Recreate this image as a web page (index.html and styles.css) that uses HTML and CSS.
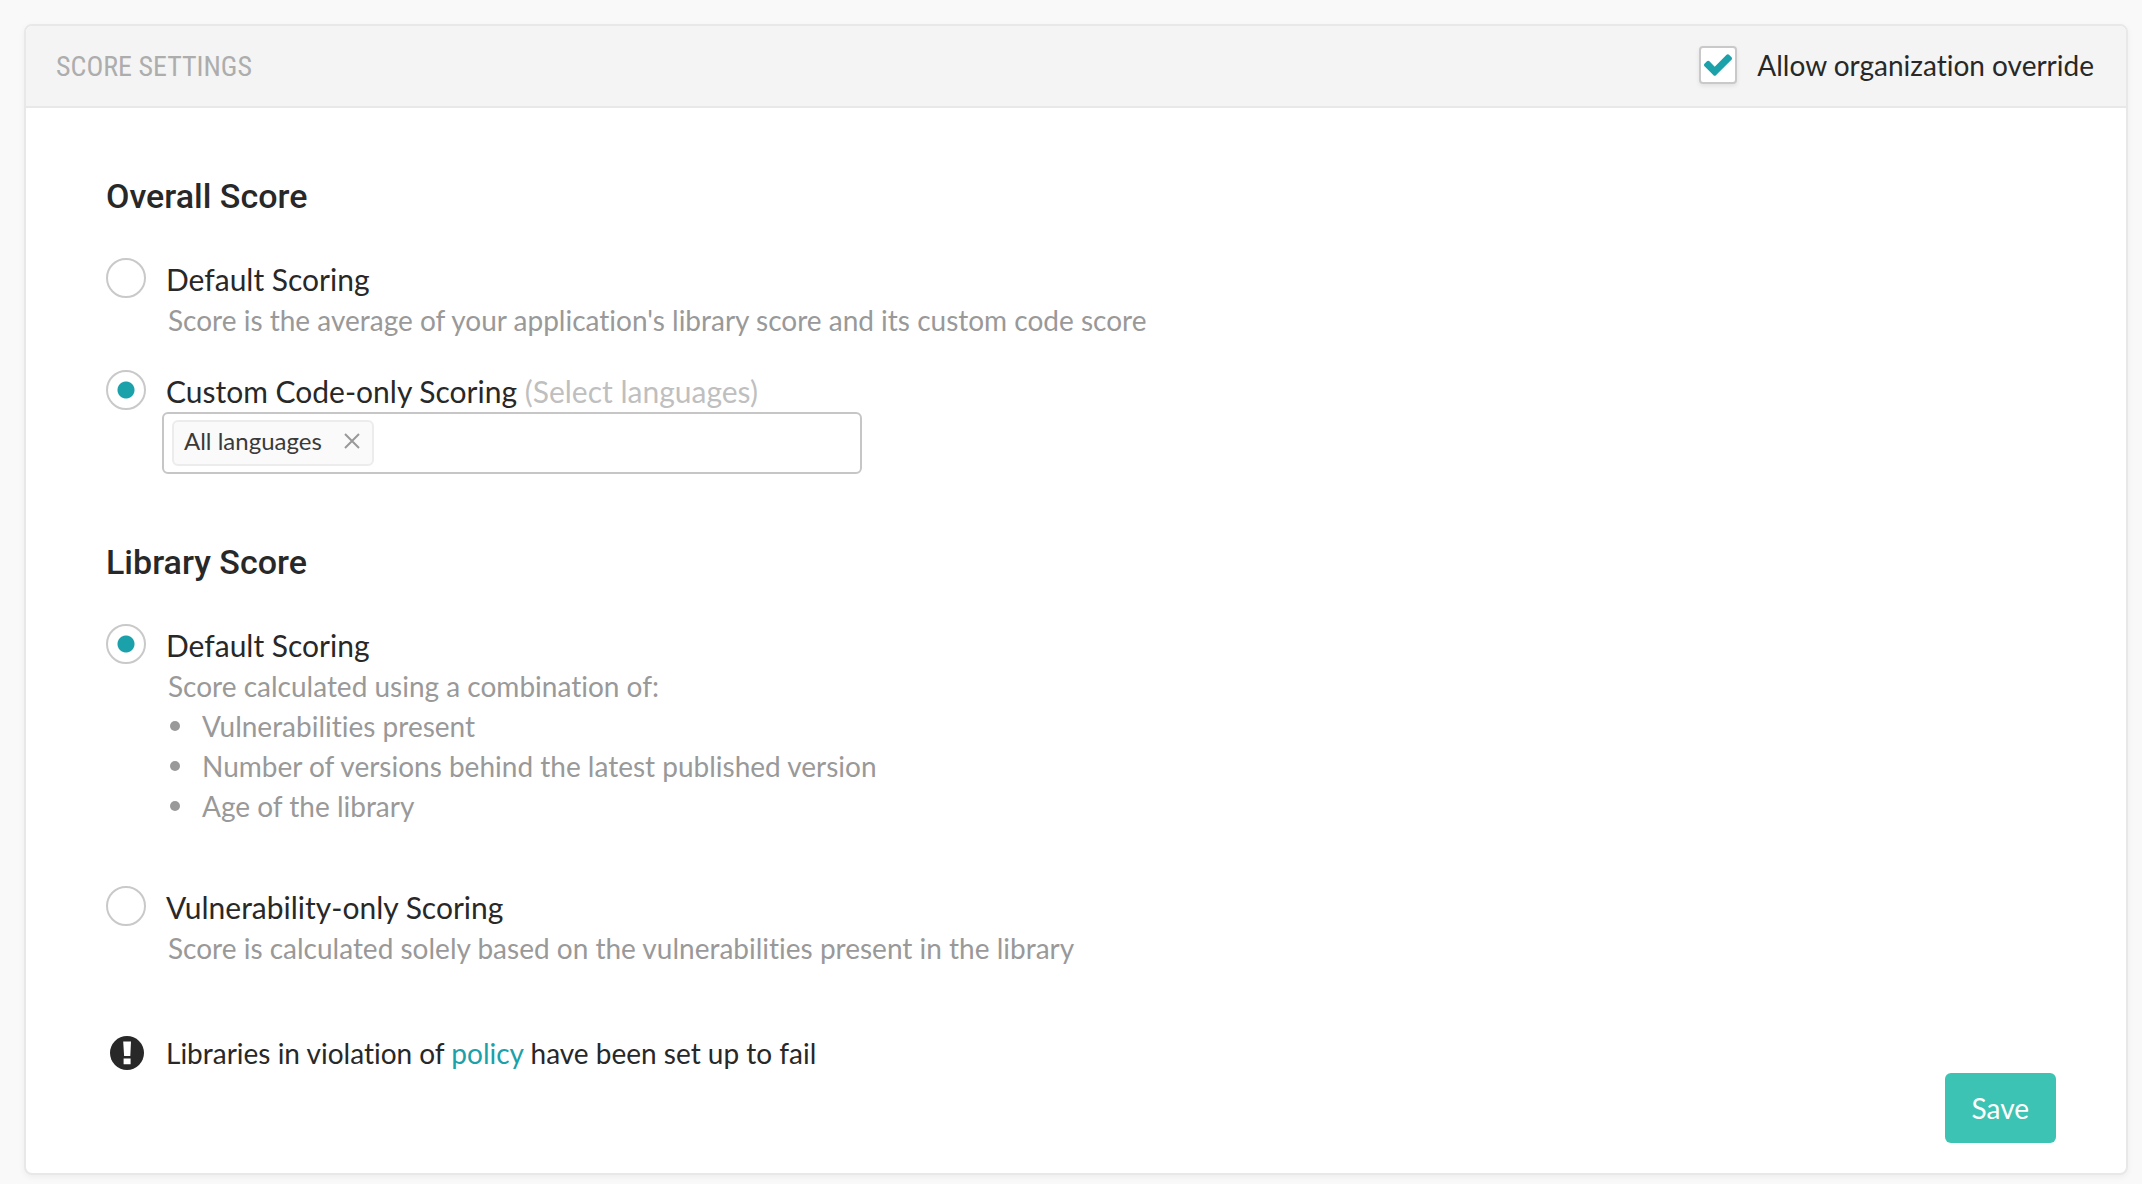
FILE: index.html
```html
<!DOCTYPE html>
<html lang="en">
<head>
<meta charset="utf-8">
<title>Score Settings</title>
<meta name="viewport" content="width=device-width, initial-scale=1">
<link rel="stylesheet" href="styles.css">
</head>
<body>
<main class="card">
  <header class="card-header">
    <h1 class="card-title">SCORE SETTINGS</h1>
    <label class="override">
      <span class="checkbox">
        <input class="checkbox-input" type="checkbox" name="override" checked>
        <svg class="checkbox-mark" viewBox="121 334 1550 1188" aria-hidden="true"><path d="M1671 566q0 40-28 68l-724 724-136 136q-28 28-68 28t-68-28l-136-136-362-362q-28-28-28-68t28-68l136-136q28-28 68-28t68 28l294 295 656-657q28-28 68-28t68 28l136 136q28 28 28 68z"/></svg>
      </span>
      <span class="override-text">Allow organization override</span>
    </label>
  </header>
  <form class="card-body">
    <section class="group">
      <h2 class="group-title">Overall Score</h2>
      <div class="option">
        <input class="radio" type="radio" name="overall" id="overall-default">
        <div class="option-text">
          <label class="option-label" for="overall-default">Default Scoring</label>
          <p class="option-desc">Score is the average of your application's library score and its custom code score</p>
        </div>
      </div>
      <div class="option">
        <input class="radio" type="radio" name="overall" id="overall-custom" checked>
        <div class="option-text">
          <label class="option-label" for="overall-custom">Custom Code-only Scoring <span class="hint">(Select languages)</span></label>
          <div class="tag-field">
            <span class="tag">All languages
              <button class="tag-remove" type="button" aria-label="Remove All languages"><svg class="tag-x" viewBox="0 0 16 16" aria-hidden="true"><path d="M1 1l14 14M15 1L1 15"/></svg></button>
            </span>
            <input class="tag-input" type="text" aria-label="Select languages">
          </div>
        </div>
      </div>
    </section>
    <section class="group">
      <h2 class="group-title">Library Score</h2>
      <div class="option option-long">
        <input class="radio" type="radio" name="library" id="library-default" checked>
        <div class="option-text">
          <label class="option-label" for="library-default">Default Scoring</label>
          <p class="option-desc">Score calculated using a combination of:</p>
          <ul class="factors">
            <li class="factor">Vulnerabilities present</li>
            <li class="factor">Number of versions behind the latest published version</li>
            <li class="factor">Age of the library</li>
          </ul>
        </div>
      </div>
      <div class="option">
        <input class="radio" type="radio" name="library" id="library-vuln">
        <div class="option-text">
          <label class="option-label" for="library-vuln">Vulnerability-only Scoring</label>
          <p class="option-desc">Score is calculated solely based on the vulnerabilities present in the library</p>
        </div>
      </div>
    </section>
    <div class="notice">
      <svg class="notice-icon" viewBox="0 0 34 34" aria-hidden="true"><circle cx="17" cy="17" r="17" fill="#282828"/><path d="M13.2 5.5h7.8l-.7 14.5h-6.2zM13.6 22.6h7v5.6h-7z" fill="#fff"/></svg>
      <p class="notice-text">Libraries in violation of <a class="link" href="#policy">policy</a> have been set up to fail</p>
    </div>
    <div class="actions">
      <button class="save" type="submit">Save</button>
    </div>
  </form>
</main>
</body>
</html>
```
FILE: styles.css
```css
* {
  box-sizing: border-box;
}

body {
  margin: 0;
  padding: 24px 14px 10px 24px;
  background: #f9f9f9;
  color: #282828;
  font: 28px/40px Lato, sans-serif;
  font-variant-ligatures: none;
}

h1, h2, p, ul {
  margin: 0;
  padding: 0;
}

.card {
  border: 2px solid #e8e8e8;
  border-radius: 8px;
  background: #fff;
  box-shadow: 0 2px 6px rgba(0, 0, 0, 0.05);
}

.card-header {
  display: flex;
  align-items: last baseline;
  justify-content: space-between;
  padding: 19px 32px 19px 30px;
  border-bottom: 2px solid #e8e8e8;
  border-radius: 6px 6px 0 0;
  background: #f4f4f4;
}

.card-title {
  color: #adadad;
  font: 400 28px/40px "Roboto Condensed", Roboto, sans-serif;
}

.override {
  display: flex;
  align-items: center;
  gap: 20px;
}

.checkbox {
  display: grid;
  place-items: center;
}

.checkbox-input,
.checkbox-mark {
  grid-area: 1 / 1;
}

.checkbox-input {
  appearance: none;
  width: 38px;
  height: 38px;
  margin: 0;
  border: 2px solid #c9c9c9;
  border-radius: 4px;
  background: #fff;
  box-shadow: 0 2px 4px rgba(0, 0, 0, 0.08);
}

.checkbox-mark {
  width: 28px;
  height: 22px;
  fill: #1aa1aa;
  pointer-events: none;
  visibility: hidden;
}

.checkbox-input:checked + .checkbox-mark {
  visibility: visible;
}

.card-body {
  padding: 68px 70px 30px 80px;
}

.group + .group {
  margin-top: 68px;
}

.group-title {
  margin-bottom: 42px;
  font: 500 34px/40px Roboto, sans-serif;
}

.option {
  display: grid;
  grid-template-columns: 40px 1fr;
  gap: 16px;
}

.option + .option {
  margin-top: 30px;
}

.option-long + .option {
  margin-top: 60px;
}

.radio {
  appearance: none;
  width: 40px;
  height: 40px;
  margin: 0;
  border: 2px solid #c9c9c9;
  border-radius: 50%;
  background: #fff;
}

.radio:checked {
  background: radial-gradient(circle, #1aa1aa 8px, #fff 9px);
}

.option-label {
  display: block;
  padding-left: 4px;
  font-size: 30px;
  line-height: 42px;
}

.hint {
  color: #bfbfbf;
}

.option-desc,
.factors {
  padding-left: 6px;
  color: #999;
}

.factors {
  list-style: none;
}

.factor {
  display: flex;
  align-items: center;
  gap: 22px;
  padding-left: 2px;
}

.factor::before {
  content: "";
  width: 10px;
  height: 10px;
  border-radius: 50%;
  background: #999;
}

.tag-field {
  display: flex;
  align-items: center;
  gap: 8px;
  max-width: 700px;
  padding: 6px 8px;
  border: 2px solid #c6c6c6;
  border-radius: 6px;
}

.tag {
  display: flex;
  align-items: center;
  gap: 22px;
  padding: 0 12px 4px 10px;
  border: 2px solid #ececec;
  border-radius: 6px;
  background: #fafafa;
  color: #3a3a3a;
  font-size: 24px;
  line-height: 38px;
}

.tag-remove {
  display: flex;
  padding: 0;
  border: 0;
  background: none;
}

.tag-x {
  width: 16px;
  height: 16px;
  fill: none;
  stroke: #999;
  stroke-width: 2;
}

.tag-input {
  flex: 1;
  min-width: 0;
  padding: 0;
  border: 0;
  outline: 0;
  background: none;
  font: inherit;
}

.notice {
  display: flex;
  align-items: center;
  gap: 22px;
  margin-top: 65px;
  padding-left: 4px;
}

.notice-icon {
  width: 34px;
  height: 34px;
}

.link {
  color: #1aa1aa;
  text-decoration: none;
}

.actions {
  display: flex;
  justify-content: flex-end;
}

.save {
  padding: 15px 27px;
  border: 0;
  border-radius: 6px;
  background: #3dc3b3;
  color: #fff;
  font: inherit;
}
```
